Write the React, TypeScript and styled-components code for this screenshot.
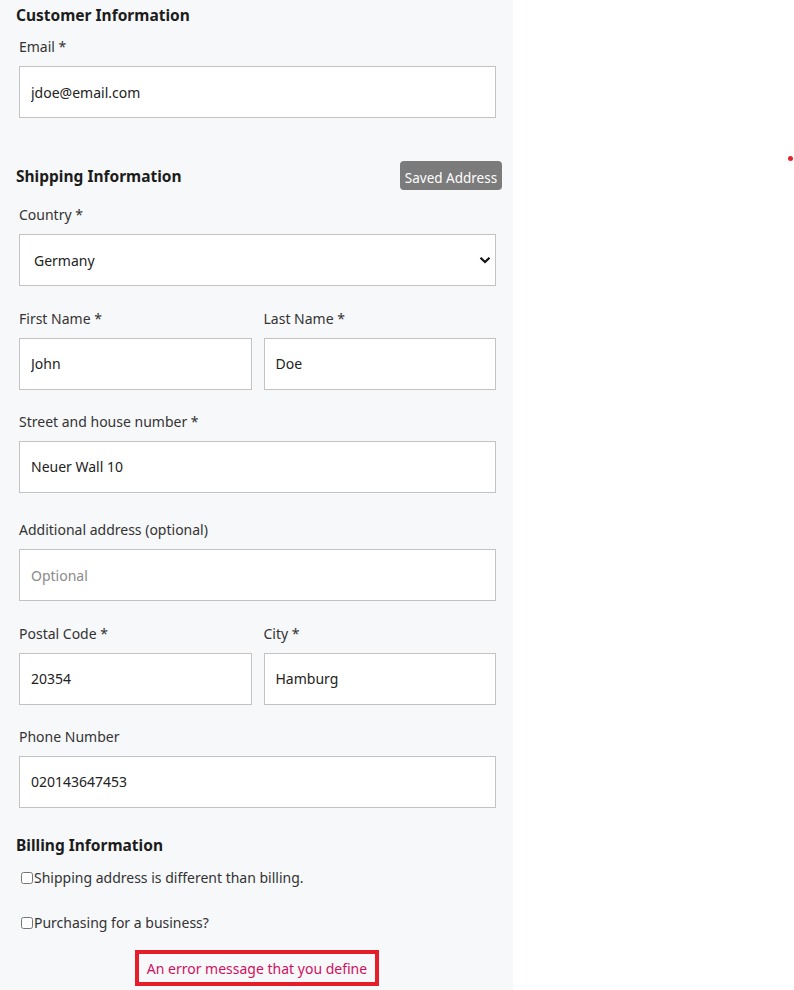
import React from 'react';
import styled, { createGlobalStyle } from 'styled-components';

const GlobalStyle = createGlobalStyle`
  html, body {
    margin: 0;
    padding: 0;
    background: #ffffff;
    font-family: "Noto Sans", "Open Sans", Arial, sans-serif;
  }
  * {
    box-sizing: border-box;
  }
`;

const Page = styled.div`
  position: relative;
  width: 794px;
  min-height: 990px;
  display: flex;
`;

const Panel = styled.form`
  width: 513px;
  background: #f7f8fa;
  padding: 5px 17px 4px 16px;
  display: flex;
  flex-direction: column;
`;

const SectionHeader = styled.div<{ top?: number }>`
  display: flex;
  align-items: center;
  justify-content: space-between;
  margin-top: ${(p) => p.top ?? 0}px;
  margin-right: -6px;
`;

const Heading = styled.h2`
  margin: 0;
  font-size: 15.5px;
  line-height: 20px;
  font-weight: 700;
  color: #1c1c1c;
`;

const SavedButton = styled.button`
  height: 29px;
  width: 102px;
  padding: 4px 0 0;
  border: none;
  border-radius: 4px;
  background: #7b7b7b;
  color: #ffffff;
  font-family: inherit;
  font-size: 13.5px;
  cursor: pointer;
`;

const Field = styled.div<{ gap?: number }>`
  display: flex;
  flex-direction: column;
  padding-left: 3px;
  margin-top: ${(p) => p.gap ?? 0}px;
  flex: 1;
  min-width: 0;
`;

const Row = styled.div<{ gap?: number }>`
  display: flex;
  gap: 12px;
  padding-left: 3px;
  margin-top: ${(p) => p.gap ?? 0}px;

  ${Field} {
    margin-top: 0;
    padding-left: 0;
  }
`;

const Label = styled.label`
  font-size: 14px;
  line-height: 20px;
  color: #333333;
  margin-bottom: 9px;
`;

const Input = styled.input`
  width: 100%;
  height: 52px;
  padding: 0 11px;
  border: 1px solid #c3c3c3;
  background: #ffffff;
  font-family: inherit;
  font-size: 14px;
  color: #222222;
  outline: none;

  &::placeholder {
    color: #8a8a8a;
  }
`;

const Select = styled.select`
  width: 100%;
  height: 52px;
  padding: 0 14px;
  border: 1px solid #c3c3c3;
  background: #ffffff
    url("data:image/svg+xml;utf8,<svg xmlns='http://www.w3.org/2000/svg' width='12' height='8' viewBox='0 0 12 8'><path d='M1.5 1.8 6 6 10.5 1.8' fill='none' stroke='%23111' stroke-width='2.2'/></svg>")
    no-repeat right 4px center;
  appearance: none;
  font-family: inherit;
  font-size: 14px;
  color: #222222;
  outline: none;
`;

const CheckRow = styled.label<{ gap?: number }>`
  display: flex;
  align-items: center;
  margin-top: ${(p) => p.gap ?? 0}px;
  padding-left: 5px;
  font-size: 14px;
  line-height: 20px;
  color: #333333;
`;

const Check = styled.input`
  width: 12px;
  height: 12px;
  margin: 0 1px 0 0;
`;

const ErrorBox = styled.div`
  align-self: center;
  margin-top: 17px;
  margin-left: 2px;
  width: 244px;
  height: 36px;
  border: 4px solid #e61e2a;
  display: flex;
  align-items: center;
  justify-content: center;
  font-size: 14px;
  color: #d0105e;
`;

const Dot = styled.span`
  position: absolute;
  left: 788px;
  top: 156px;
  width: 5px;
  height: 5px;
  border-radius: 50%;
  background: #e8232a;
`;

const App: React.FC = () => {
  return (
    <Page>
      <GlobalStyle />
      <Panel onSubmit={(e) => e.preventDefault()}>
        <SectionHeader>
          <Heading>Customer Information</Heading>
        </SectionHeader>
        <Field gap={12}>
          <Label>Email *</Label>
          <Input defaultValue="jdoe@email.com" />
        </Field>

        <SectionHeader top={43}>
          <Heading>Shipping Information</Heading>
          <SavedButton type="button">Saved Address</SavedButton>
        </SectionHeader>
        <Field gap={15}>
          <Label>Country *</Label>
          <Select defaultValue="Germany">
            <option>Germany</option>
            <option>Austria</option>
            <option>Switzerland</option>
          </Select>
        </Field>
        <Row gap={22}>
          <Field>
            <Label>First Name *</Label>
            <Input defaultValue="John" />
          </Field>
          <Field>
            <Label>Last Name *</Label>
            <Input defaultValue="Doe" />
          </Field>
        </Row>
        <Field gap={22}>
          <Label>Street and house number *</Label>
          <Input defaultValue="Neuer Wall 10" />
        </Field>
        <Field gap={27}>
          <Label>Additional address (optional)</Label>
          <Input placeholder="Optional" />
        </Field>
        <Row gap={22}>
          <Field>
            <Label>Postal Code *</Label>
            <Input defaultValue="20354" />
          </Field>
          <Field>
            <Label>City *</Label>
            <Input defaultValue="Hamburg" />
          </Field>
        </Row>
        <Field gap={22}>
          <Label>Phone Number</Label>
          <Input defaultValue="020143647453" />
        </Field>

        <SectionHeader top={27}>
          <Heading>Billing Information</Heading>
        </SectionHeader>
        <CheckRow gap={13}>
          <Check type="checkbox" />
          Shipping address is different than billing.
        </CheckRow>
        <CheckRow gap={25}>
          <Check type="checkbox" />
          Purchasing for a business?
        </CheckRow>
        <ErrorBox>An error message that you define</ErrorBox>
      </Panel>
      <Dot />
    </Page>
  );
};

export default App;
